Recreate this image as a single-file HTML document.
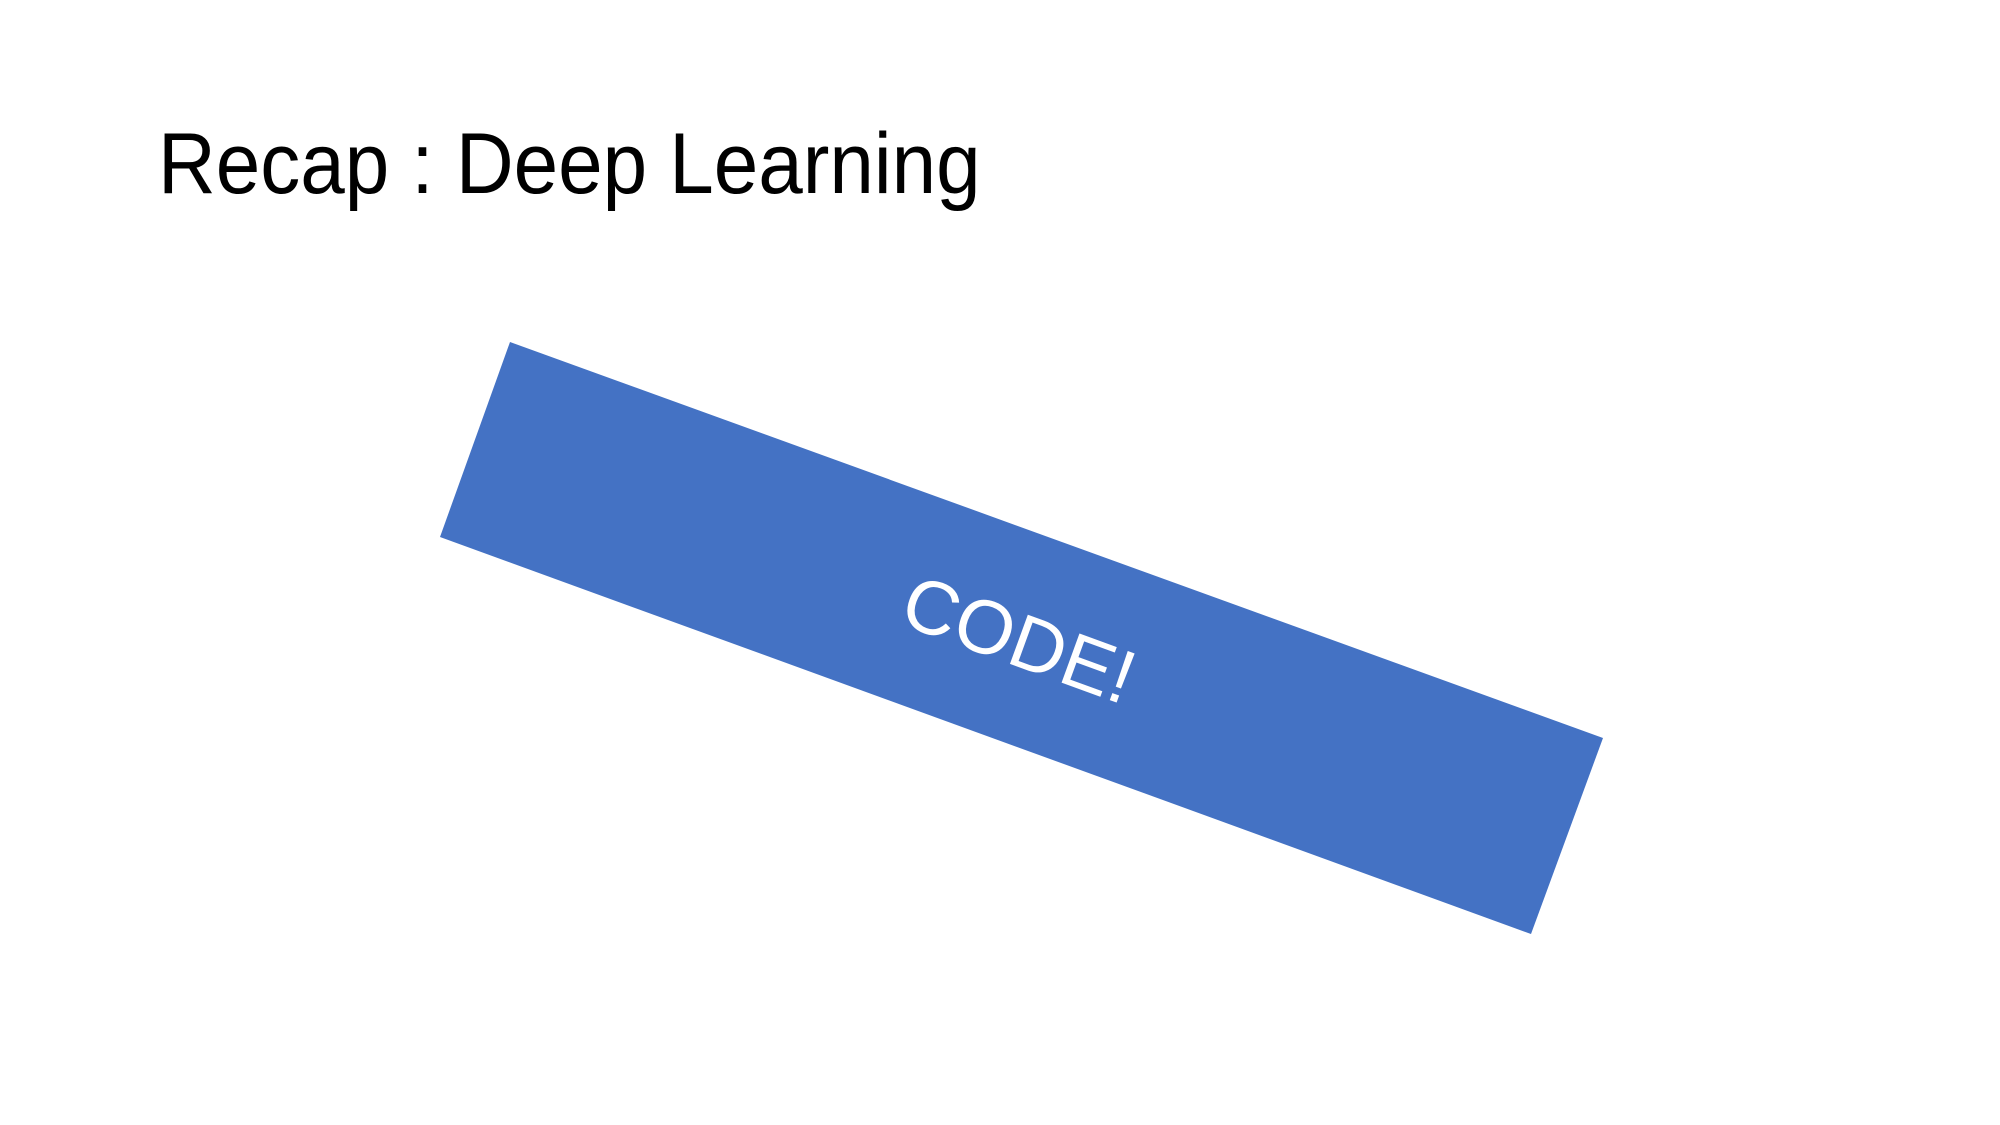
<!DOCTYPE html>
<html><head><meta charset="utf-8"><style>
html,body{margin:0;padding:0;background:#fff;width:2000px;height:1125px;overflow:hidden}
.t{position:absolute;left:158px;top:115px;font-family:"Liberation Sans",sans-serif;font-size:86px;color:#000;white-space:nowrap;transform-origin:0 0;transform:scaleX(0.93)}
svg{position:absolute;left:0;top:0}
</style></head><body>
<div class="t">Recap : Deep Learning</div>
<svg width="2000" height="1125" viewBox="0 0 2000 1125">
<polygon points="510,342 1603,738 1531,934 440,537" fill="#4472c4"/>
<text x="0" y="0" transform="translate(1017,645) rotate(20)" text-anchor="middle" dominant-baseline="middle" font-family="Liberation Sans, sans-serif" font-size="76" fill="#fff">CODE!</text>
</svg>
</body></html>
